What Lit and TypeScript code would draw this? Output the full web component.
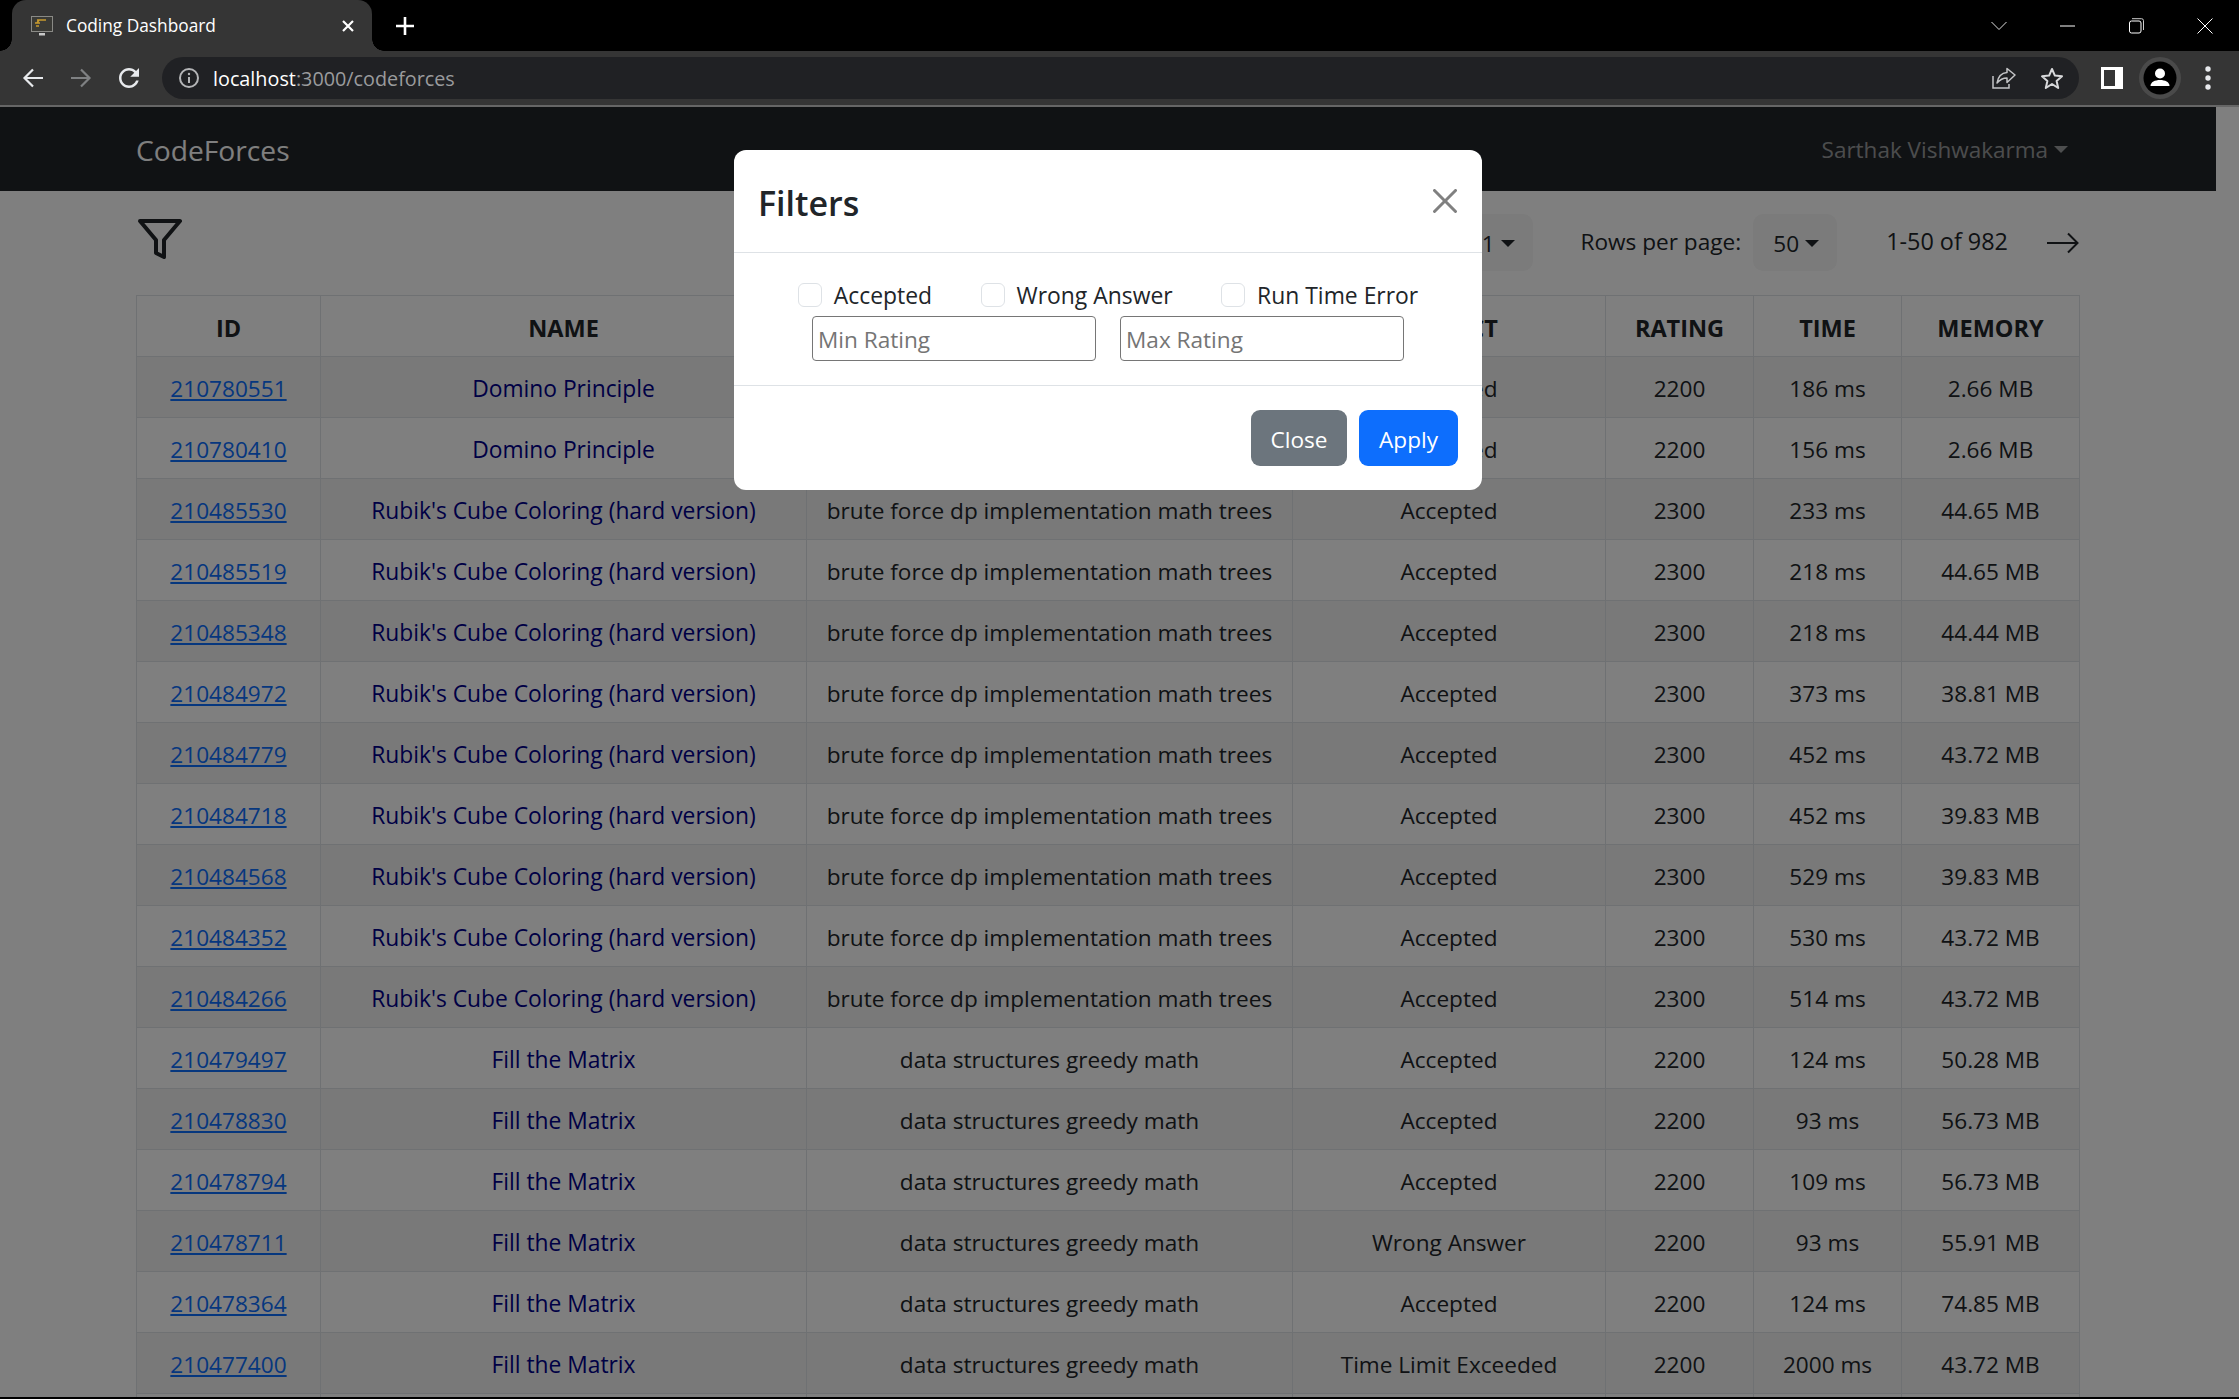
import {html, css, LitElement, svg} from 'lit';
import {customElement} from 'lit/decorators.js';

const RUBIK = "Rubik's Cube Coloring (hard version)";
const RUBIK_TAGS = 'brute force dp implementation math trees';
const MATRIX = 'Fill the Matrix';
const MATRIX_TAGS = 'data structures greedy math';

const rows = [
  ['210780551', 'Domino Principle', '', 'Accepted', '2200', '186 ms', '2.66 MB'],
  ['210780410', 'Domino Principle', '', 'Accepted', '2200', '156 ms', '2.66 MB'],
  ['210485530', RUBIK, RUBIK_TAGS, 'Accepted', '2300', '233 ms', '44.65 MB'],
  ['210485519', RUBIK, RUBIK_TAGS, 'Accepted', '2300', '218 ms', '44.65 MB'],
  ['210485348', RUBIK, RUBIK_TAGS, 'Accepted', '2300', '218 ms', '44.44 MB'],
  ['210484972', RUBIK, RUBIK_TAGS, 'Accepted', '2300', '373 ms', '38.81 MB'],
  ['210484779', RUBIK, RUBIK_TAGS, 'Accepted', '2300', '452 ms', '43.72 MB'],
  ['210484718', RUBIK, RUBIK_TAGS, 'Accepted', '2300', '452 ms', '39.83 MB'],
  ['210484568', RUBIK, RUBIK_TAGS, 'Accepted', '2300', '529 ms', '39.83 MB'],
  ['210484352', RUBIK, RUBIK_TAGS, 'Accepted', '2300', '530 ms', '43.72 MB'],
  ['210484266', RUBIK, RUBIK_TAGS, 'Accepted', '2300', '514 ms', '43.72 MB'],
  ['210479497', MATRIX, MATRIX_TAGS, 'Accepted', '2200', '124 ms', '50.28 MB'],
  ['210478830', MATRIX, MATRIX_TAGS, 'Accepted', '2200', '93 ms', '56.73 MB'],
  ['210478794', MATRIX, MATRIX_TAGS, 'Accepted', '2200', '109 ms', '56.73 MB'],
  ['210478711', MATRIX, MATRIX_TAGS, 'Wrong Answer', '2200', '93 ms', '55.91 MB'],
  ['210478364', MATRIX, MATRIX_TAGS, 'Accepted', '2200', '124 ms', '74.85 MB'],
  ['210477400', MATRIX, MATRIX_TAGS, 'Time Limit Exceeded', '2200', '2000 ms', '43.72 MB'],
  ['', '', '', '', '', '', ''],
];

const icon = (w: number, h: number, body: unknown) =>
  html`<svg width=${w} height=${h} viewBox="0 0 ${w} ${h}" fill="none">${body}</svg>`;

@customElement('app-root')
class AppRoot extends LitElement {
  static styles = css`
    :host {
      display: block;
      width: 2239px;
      height: 1399px;
      overflow: hidden;
      background: #000;
      font-family: 'Open Sans', sans-serif;
      font-size: 22.6px;
      color: #212529;
    }
    svg {
      display: block;
      flex: none;
    }

    /* browser chrome */
    .tabstrip {
      height: 51px;
      display: flex;
      background: #000;
    }
    .tab {
      position: relative;
      margin-left: 12px;
      width: 360px;
      box-sizing: border-box;
      padding-left: 19px;
      display: flex;
      align-items: center;
      background: #353535;
      border-radius: 14px 14px 0 0;
      color: #fff;
      font-size: 17.3px;
    }
    .tab::before,
    .tab::after {
      content: '';
      position: absolute;
      bottom: 0;
      width: 12px;
      height: 12px;
    }
    .tab::before {
      left: -12px;
      background: radial-gradient(circle at 0 0, #000 11.5px, #353535 12px);
    }
    .tab::after {
      right: -12px;
      background: radial-gradient(circle at 100% 0, #000 11.5px, #353535 12px);
    }
    .tab-title {
      margin-left: 13px;
      flex: 1;
    }
    .tab-close {
      margin-right: 18px;
    }
    .new-tab {
      margin-left: 24px;
      align-self: center;
    }
    .window {
      margin-left: auto;
      display: flex;
    }
    .window div {
      width: 68.5px;
      display: flex;
      align-items: center;
      justify-content: center;
    }
    .toolbar {
      height: 54px;
      box-sizing: border-box;
      padding: 0 10px 0 12px;
      display: flex;
      align-items: center;
      gap: 6px;
      background: #353535;
    }
    .tool {
      width: 42px;
      height: 42px;
      display: flex;
      align-items: center;
      justify-content: center;
    }
    .omnibox {
      margin: 0 6px;
      height: 42px;
      flex: 1;
      display: flex;
      align-items: center;
      padding-left: 17px;
      background: #202124;
      border-radius: 21px;
      font-size: 19.8px;
      color: #fff;
    }
    .url {
      margin-left: 14px;
      flex: 1;
    }
    .url span {
      color: #9a9b9d;
    }
    .omni-icons {
      display: flex;
      align-items: center;
      gap: 24px;
      margin-right: 15px;
    }
    .chrome-line {
      height: 2px;
      background: #666;
    }

    /* page under the dialog */
    .viewport {
      position: relative;
      height: 1290px;
      overflow: hidden;
      background: #fff;
    }
    .page {
      width: 2216px;
    }
    .navbar {
      height: 84px;
      box-sizing: border-box;
      padding: 0 148px 0 136px;
      display: flex;
      align-items: center;
      justify-content: space-between;
      background: #212529;
    }
    .brand {
      padding-top: 1px;
      font-size: 28.2px;
      color: #fff;
    }
    .user {
      display: flex;
      align-items: center;
      gap: 6px;
      font-size: 22.5px;
      color: rgba(255, 255, 255, 0.55);
    }
    .caret {
      width: 0;
      height: 0;
      border-left: 7px solid transparent;
      border-right: 7px solid transparent;
      border-top: 7px solid currentColor;
    }
    .controls {
      margin: 23px 137px 24px 136px;
      height: 57px;
      display: flex;
      align-items: center;
    }
    .filter {
      align-self: flex-start;
      margin-top: 1px;
      margin-right: auto;
    }
    .select {
      height: 57px;
      width: 84px;
      box-sizing: border-box;
      padding: 2px 18px 0 0;
      display: flex;
      align-items: center;
      justify-content: flex-end;
      gap: 6px;
      background: #f6f6f6;
      border-radius: 10px;
    }
    .rows-label {
      margin: 0 12px 2px 48px;
      font-size: 22.6px;
    }
    .range {
      margin: 0 39px 4px 49px;
      font-size: 23.4px;
    }
    table {
      margin-left: 136px;
      width: 1943px;
      table-layout: fixed;
      border-collapse: collapse;
    }
    .c-id { width: 184px; }
    .c-name { width: 486px; }
    .c-tags { width: 486px; }
    .c-verdict { width: 313px; }
    .c-rating { width: 148px; }
    .c-time { width: 148px; }
    .c-memory { width: 178px; }
    th,
    td {
      height: 61px;
      box-sizing: border-box;
      padding: 3px 0 0;
      border: 1px solid #dee2e6;
      text-align: center;
      white-space: nowrap;
    }
    th {
      font-size: 23.5px;
      font-weight: 700;
    }
    tbody tr:nth-child(odd) {
      background: rgba(0, 0, 0, 0.05);
    }
    td a {
      color: #0d6efd;
      text-decoration: underline;
    }
    .name {
      font-size: 22.8px;
      color: #00008b;
    }

    /* dialog */
    .backdrop {
      position: absolute;
      inset: 0;
      box-sizing: border-box;
      padding: 43px 23px 0 0;
      display: flex;
      justify-content: center;
      align-items: flex-start;
      background: rgba(0, 0, 0, 0.5);
    }
    .modal {
      width: 748px;
      background: #fff;
      border-radius: 12px;
      color: #212529;
    }
    .modal-header {
      height: 103px;
      box-sizing: border-box;
      padding: 0 25px 0 24px;
      display: flex;
      align-items: center;
      justify-content: space-between;
      border-bottom: 1px solid #dee2e6;
    }
    .modal-title {
      padding-top: 3px;
      font-size: 34px;
      font-weight: 600;
    }
    .modal-body {
      height: 133px;
      box-sizing: border-box;
      padding-top: 30px;
      border-bottom: 1px solid #dee2e6;
    }
    .checks {
      height: 33px;
      display: flex;
      justify-content: center;
      gap: 48.5px;
      font-size: 22.9px;
    }
    .check {
      display: flex;
      gap: 12px;
      height: 24px;
      align-items: center;
    }
    .box {
      width: 24px;
      height: 24px;
      box-sizing: border-box;
      border: 1px solid #dee2e6;
      border-radius: 6px;
      background: #fff;
    }
    .inputs {
      display: flex;
      justify-content: center;
      gap: 24px;
    }
    .input {
      width: 284px;
      height: 45px;
      box-sizing: border-box;
      padding: 2px 5px 0;
      border: 1.5px solid #767676;
      border-radius: 4px;
      font: inherit;
      color: #212529;
      outline: none;
    }
    .input::placeholder {
      color: #757575;
      opacity: 1;
    }
    .modal-footer {
      height: 104px;
      box-sizing: border-box;
      padding: 24px 24px 0 0;
      display: flex;
      justify-content: flex-end;
      gap: 12px;
    }
    .btn {
      height: 56px;
      box-sizing: border-box;
      padding-top: 2px;
      border-radius: 9px;
      display: flex;
      align-items: center;
      justify-content: center;
      color: #fff;
    }
    .btn-close {
      width: 96px;
      background: #6c757d;
    }
    .btn-apply {
      width: 99px;
      background: #0d6efd;
    }
    .bottom-edge {
      height: 2px;
      background: #000;
    }
  `;

  render() {
    return html`
      <div class="tabstrip">
        <div class="tab">
          ${icon(22, 20, svg`
            <rect x="0.5" y="0.5" width="21" height="15" fill="#3a3a36" stroke="#8a8a86"/>
            <path d="M6 4h9M4 7h5M5 10h3M6 7l2-3" stroke="#c79a2e" stroke-width="1.6"/>
            <rect x="8" y="17" width="6" height="2.5" fill="#c8c8c8"/>`)}
          <span class="tab-title">Coding Dashboard</span>
          <span class="tab-close">
            ${icon(12, 12, svg`<path d="M1 1l10 10M11 1L1 11" stroke="#fff" stroke-width="2.2"/>`)}
          </span>
        </div>
        <div class="new-tab">
          ${icon(18, 18, svg`<path d="M9 0v18M0 9h18" stroke="#fff" stroke-width="2.6"/>`)}
        </div>
        <div class="window">
          <div>${icon(16, 10, svg`<path d="M.5 1l7.5 7.5L15.5 1" stroke="#ddd"/>`)}</div>
          <div>${icon(15, 2, svg`<path d="M0 1h15" stroke="#fff"/>`)}</div>
          <div>${icon(15, 16, svg`
            <rect x=".5" y="3" width="11.5" height="12" rx="2" stroke="#fff"/>
            <path d="M3 .7h9.5a2 2 0 0 1 2 2V12" stroke="#ccc"/>`)}</div>
          <div>${icon(16, 16, svg`<path d="M.5.5l15 15M15.5.5l-15 15" stroke="#fff"/>`)}</div>
        </div>
      </div>
      <div class="toolbar">
        <div class="tool">
          ${icon(22, 20, svg`<path d="M21 10H2.5M11 1.5L2.5 10l8.5 8.5" stroke="#e8eaed" stroke-width="2.2"/>`)}
        </div>
        <div class="tool">
          ${icon(22, 20, svg`<path d="M1 10h18.5M11 1.5l8.500 8.500-8.500 8.500" stroke="#7f8183" stroke-width="2.200"/>`)}
        </div>
        <div class="tool">
          <svg width="30" height="30" viewBox="0 0 24 24" fill="#e8eaed">
            <path d="M17.65 6.350C16.200 4.900 14.210 4 12 4c-4.420 0-7.990 3.580-7.990 8s3.570 8 7.990 8c3.730 0 6.840-2.550 7.730-6h-2.080c-.820 2.330-3.040 4-5.650 4-3.310 0-6-2.690-6-6s2.690-6 6-6c1.660 0 3.140.690 4.220 1.780L13 11h7V4l-2.350 2.350z"/>
          </svg>
        </div>
        <div class="omnibox">
          ${icon(20, 20, svg`
            <circle cx="10" cy="10" r="9" stroke="#b4b5b7" stroke-width="2"/>
            <path d="M10 9v6" stroke="#b4b5b7" stroke-width="2"/>
            <circle cx="10" cy="6" r="1.200" fill="#b4b5b7"/>`)}
          <span class="url">localhost<span>:3000/codeforces</span></span>
          <div class="omni-icons">
            ${icon(24, 22, svg`
              <path d="M1 9v12h16v-4" stroke="#c4c5c7" stroke-width="1.500"/>
              <path d="M23 8L15 1.500V5.500C9 6 6 10 5 16c3-3.500 6-5 10-5v4.500z" stroke="#c4c5c7" stroke-width="1.500" stroke-linejoin="round"/>`)}
            ${icon(24, 23, svg`
              <path d="M12 2l2.900 6.600 7.100.700-5.400 4.700 1.600 7L12 17l-6.200 4 1.600-7L2 9.300l7.100-.700z" stroke="#d8d9db" stroke-width="2" stroke-linejoin="round"/>`)}
          </div>
        </div>
        <div class="tool">
          ${icon(22, 22, svg`
            <rect width="22" height="22" fill="#fff"/>
            <rect x="3" y="3" width="11" height="16" fill="#353535"/>`)}
        </div>
        <div class="tool">
          ${icon(42, 42, svg`
            <circle cx="21" cy="21" r="21" fill="#4a4a4a"/>
            <circle cx="21" cy="21" r="16.500" fill="#000"/>
            <circle cx="21" cy="16.500" r="5" fill="#fff"/>
            <path d="M11.500 29c0-4 4.500-6 9.500-6s9.500 2 9.500 6z" fill="#fff"/>`)}
        </div>
        <div class="tool">
          ${icon(6, 24, svg`
            <circle cx="3" cy="3" r="2.700" fill="#e8eaed"/>
            <circle cx="3" cy="12" r="2.700" fill="#e8eaed"/>
            <circle cx="3" cy="21" r="2.700" fill="#e8eaed"/>`)}
        </div>
      </div>
      <div class="chrome-line"></div>
      <div class="viewport">
        <div class="page">
          <nav class="navbar">
            <span class="brand">CodeForces</span>
            <span class="user">Sarthak Vishwakarma <span class="caret"></span></span>
          </nav>
          <div class="controls">
            <svg class="filter" width="48" height="48" viewBox="0 0 24 24" fill="none" stroke="#212529" stroke-width="2" stroke-linejoin="round">
              <polygon points="22 3 2 3 10 12.460 10 19 14 21 14 12.460 22 3"/>
            </svg>
            <div class="select">1 <span class="caret"></span></div>
            <span class="rows-label">Rows per page:</span>
            <div class="select">50 <span class="caret"></span></div>
            <span class="range">1-50 of 982</span>
            ${icon(32, 22, svg`<path d="M0 11h30M21 1.500L30.500 11 21 20.500" stroke="#212529" stroke-width="2"/>`)}
          </div>
          <table>
            <colgroup>
              <col class="c-id" /><col class="c-name" /><col class="c-tags" />
              <col class="c-verdict" /><col class="c-rating" /><col class="c-time" /><col class="c-memory" />
            </colgroup>
            <thead>
              <tr>
                <th>ID</th><th>NAME</th><th>TAGS</th><th>VERDICT</th><th>RATING</th><th>TIME</th><th>MEMORY</th>
              </tr>
            </thead>
            <tbody>
              ${rows.map(
                (r) => html`<tr>
                  <td><a>${r[0]}</a></td>
                  <td class="name">${r[1]}</td>
                  <td>${r[2]}</td>
                  <td>${r[3]}</td>
                  <td>${r[4]}</td>
                  <td>${r[5]}</td>
                  <td>${r[6]}</td>
                </tr>`
              )}
            </tbody>
          </table>
        </div>
        <div class="backdrop">
          <div class="modal">
            <div class="modal-header">
              <span class="modal-title">Filters</span>
              <svg width="24" height="24" viewBox="0 0 16 16" fill="#808080">
                <path d="M.293.293a1 1 0 011.414 0L8 6.586 14.293.293a1 1 0 111.414 1.414L9.414 8l6.293 6.293a1 1 0 01-1.414 1.414L8 9.414l-6.293 6.293a1 1 0 01-1.414-1.414L6.586 8 .293 1.707a1 1 0 010-1.414z"/>
              </svg>
            </div>
            <div class="modal-body">
              <div class="checks">
                <label class="check"><span class="box"></span>Accepted</label>
                <label class="check"><span class="box"></span>Wrong Answer</label>
                <label class="check"><span class="box"></span>Run Time Error</label>
              </div>
              <div class="inputs">
                <input class="input" placeholder="Min Rating" />
                <input class="input" placeholder="Max Rating" />
              </div>
            </div>
            <div class="modal-footer">
              <div class="btn btn-close">Close</div>
              <div class="btn btn-apply">Apply</div>
            </div>
          </div>
        </div>
      </div>
      <div class="bottom-edge"></div>
    `;
  }
}
